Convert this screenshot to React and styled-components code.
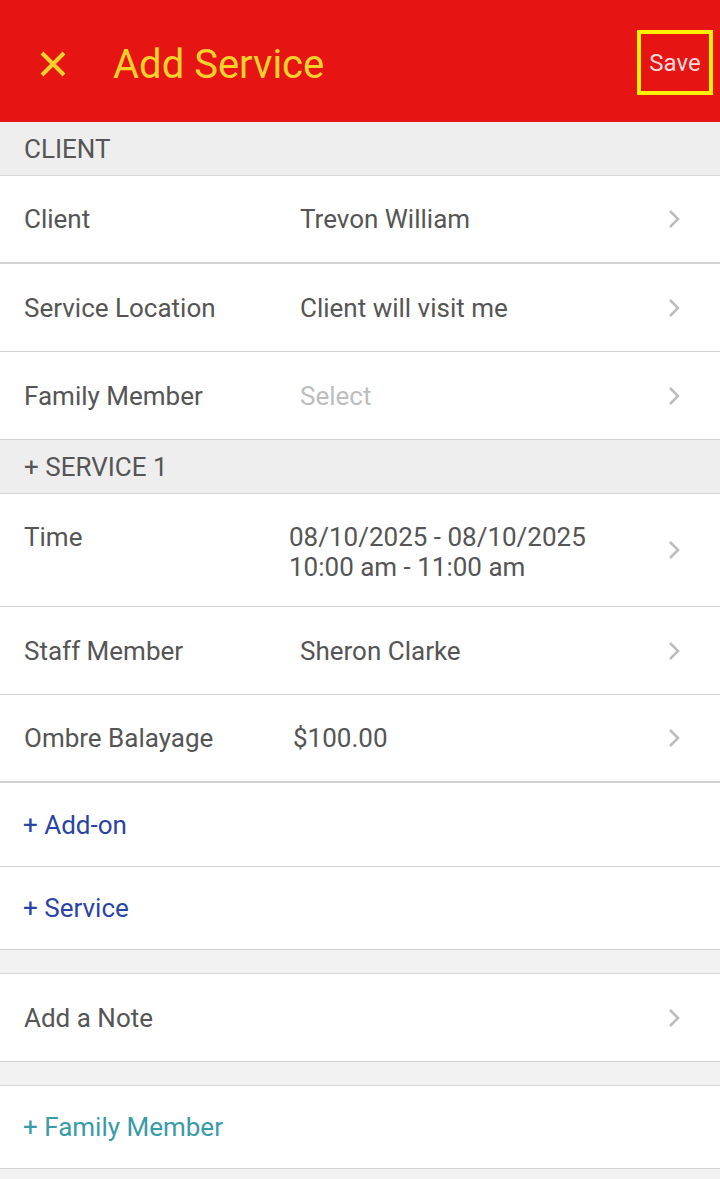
import React from 'react'
import styled, { createGlobalStyle } from 'styled-components'

const GlobalStyle = createGlobalStyle`
  html, body {
    margin: 0;
    padding: 0;
    background: #F2F2F2;
    font-family: Roboto, 'Noto Sans', sans-serif;
  }
`

const Page = styled.div`
  width: 720px;
  min-height: 1179px;
  background: #F2F2F2;
`

const Header = styled.header`
  height: 122px;
  background: #E71414;
  display: flex;
  align-items: center;
  padding: 6px 7px 0 36px;
  box-sizing: border-box;
`

const CloseBtn = styled.button`
  border: none;
  background: none;
  padding: 0;
  width: 34px;
  height: 34px;
  display: flex;
  align-items: center;
  justify-content: center;
  margin-right: 43px;
`

const Title = styled.h1`
  flex: 1;
  margin: 0;
  font-size: 40px;
  font-weight: 400;
  color: #F8D12C;
`

const SaveBtn = styled.button`
  width: 76px;
  height: 65px;
  box-sizing: border-box;
  border: 4px solid #FFF200;
  background: transparent;
  color: #F6DADA;
  font-family: Roboto, sans-serif;
  font-size: 24px;
  padding: 0;
  margin-top: -3px;
`

const SectionHead = styled.div`
  height: 54px;
  background: #EEEEEE;
  display: flex;
  align-items: center;
  padding-left: 24px;
  font-size: 26px;
  color: #555555;
  border-bottom: 1px solid #D6D6D6;
  box-sizing: border-box;
`

const Row = styled.div`
  background: #FFFFFF;
  height: ${p => p.$h || 88}px;
  display: flex;
  align-items: ${p => (p.$top ? 'flex-start' : 'center')};
  padding: ${p => (p.$top ? '28px 0 0 24px' : '0 0 0 24px')};
  box-sizing: border-box;
  border-bottom: ${p => p.$line || 1}px solid #D2D2D2;
`

const Label = styled.div`
  width: ${p => p.$w || 276}px;
  font-size: 26px;
  color: #555555;
  line-height: 30px;
`

const Value = styled.div`
  flex: 1;
  font-size: 26px;
  line-height: 30px;
  color: ${p => (p.$muted ? '#BDBDBD' : '#555555')};
`

const Chevron = styled.div`
  width: 16px;
  margin-right: 37px;
  display: flex;
  align-items: center;
  align-self: center;
  ${p => p.$top && 'margin-top: -28px;'}
`

const LinkRow = styled.div`
  background: #FFFFFF;
  height: ${p => p.$h || 84}px;
  display: flex;
  align-items: center;
  padding-left: 23px;
  box-sizing: border-box;
  border-bottom: 1px solid #D2D2D2;
  font-size: 26px;
  color: ${p => p.$color || '#2A44A6'};
`

const Spacer = styled.div`
  height: 23px;
  background: #F2F2F2;
  border-bottom: 1px solid #D6D6D6;
`

const Arrow = () => (
  <svg width="14" height="22" viewBox="0 0 14 22">
    <path d="M3 3 L11 11 L3 19" fill="none" stroke="#BDBDBD" strokeWidth="2.6" />
  </svg>
)

const DetailRow = ({ label, value, muted, w, h, top, line }) => (
  <Row $h={h} $top={top} $line={line}>
    <Label $w={w}>{label}</Label>
    <Value $muted={muted}>{value}</Value>
    <Chevron $top={top}><Arrow /></Chevron>
  </Row>
)

export default function App() {
  return (
    <Page>
      <GlobalStyle />
      <Header>
        <CloseBtn aria-label="close">
          <svg width="30" height="30" viewBox="0 0 30 30">
            <path d="M4 4 L26 26 M26 4 L4 26" stroke="#F8D12C" strokeWidth="4" />
          </svg>
        </CloseBtn>
        <Title>Add Service</Title>
        <SaveBtn>Save</SaveBtn>
      </Header>

      <SectionHead>CLIENT</SectionHead>
      <DetailRow label="Client" value="Trevon William" line={2} />
      <DetailRow label="Service Location" value="Client will visit me" />
      <DetailRow label="Family Member" value="Select" muted />

      <SectionHead>+ SERVICE 1</SectionHead>
      <DetailRow
        label="Time"
        w={265}
        h={113}
        top
        value={<>08/10/2025 - 08/10/2025<br />10:00 am - 11:00 am</>}
      />
      <DetailRow label="Staff Member" value="Sheron Clarke" />
      <DetailRow label="Ombre Balayage" w={269} value="$100.00" line={2} />

      <LinkRow>+ Add-on</LinkRow>
      <LinkRow $h={83}>+ Service</LinkRow>
      <Spacer />
      <DetailRow label="Add a Note" value="" />
      <Spacer />
      <LinkRow $h={83} $color="#3A9BA8">+ Family Member</LinkRow>
    </Page>
  )
}
